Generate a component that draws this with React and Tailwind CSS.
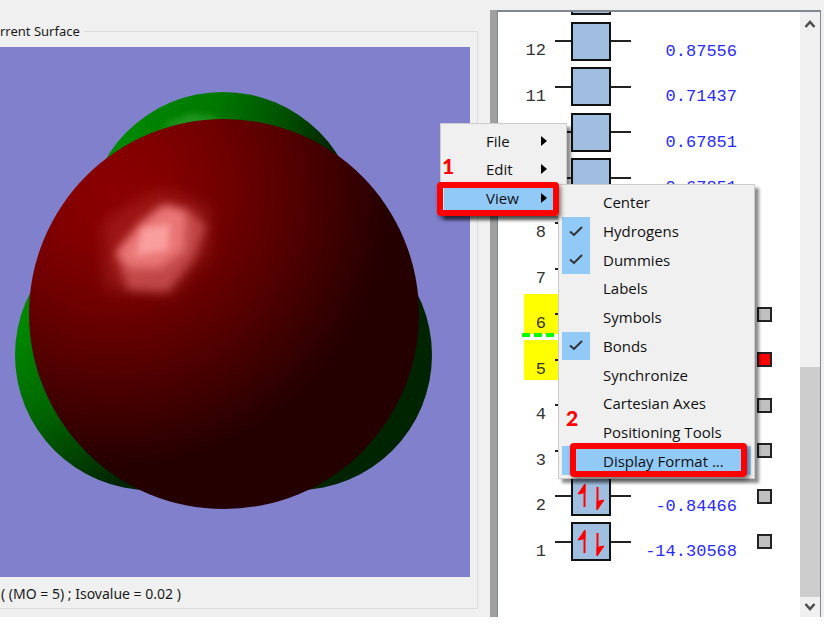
const orbitals = [
  { id: 12, energy: "0.87556" },
  { id: 11, energy: "0.71437" },
  { id: 10, energy: "0.67851" },
  { id: 9, energy: "0.67851" },
  { id: 8 },
  { id: 7 },
  { id: 6, picker: true, active: true, lumo: true },
  { id: 5, picker: true, active: true, selected: true, filled: true },
  { id: 4, picker: true, filled: true },
  { id: 3, picker: true, filled: true },
  { id: 2, picker: true, filled: true, energy: "-0.84466" },
  { id: 1, picker: true, filled: true, energy: "-14.30568" },
];

const viewItems = [
  { label: "Center" },
  { label: "Hydrogens", checked: true },
  { label: "Dummies", checked: true },
  { label: "Labels" },
  { label: "Symbols" },
  { label: "Bonds", checked: true },
  { label: "Synchronize" },
  { label: "Cartesian Axes" },
  { label: "Positioning Tools" },
  { label: "Display Format ...", current: true },
];

function SurfaceDrawing() {
  return (
    <svg viewBox="0 47 470 530" preserveAspectRatio="xMinYMin meet" className="block w-full h-full">
      <defs>
        <radialGradient id="lobe" gradientUnits="userSpaceOnUse" cx="112" cy="190" r="300">
          <stop offset="0" stopColor="#8b0000" />
          <stop offset="0.2" stopColor="#820000" />
          <stop offset="0.4" stopColor="#6e0000" />
          <stop offset="0.6" stopColor="#540000" />
          <stop offset="0.8" stopColor="#370000" />
          <stop offset="0.93" stopColor="#240000" />
        </radialGradient>
        <linearGradient id="topLobe" gradientUnits="userSpaceOnUse" x1="130" y1="110" x2="330" y2="160">
          <stop offset="0" stopColor="#008800" />
          <stop offset="0.4" stopColor="#007800" />
          <stop offset="0.7" stopColor="#005500" />
          <stop offset="1" stopColor="#002400" />
        </linearGradient>
        <linearGradient id="leftLobe" gradientUnits="userSpaceOnUse" x1="20" y1="330" x2="105" y2="490">
          <stop offset="0" stopColor="#008600" />
          <stop offset="0.4" stopColor="#006c00" />
          <stop offset="0.75" stopColor="#004400" />
          <stop offset="1" stopColor="#002400" />
        </linearGradient>
        <filter id="wide" x="-30%" y="-30%" width="160%" height="160%">
          <feGaussianBlur stdDeviation="8" />
        </filter>
        <filter id="soft" x="-30%" y="-30%" width="160%" height="160%">
          <feGaussianBlur stdDeviation="5" />
        </filter>
        <filter id="fine" x="-30%" y="-30%" width="160%" height="160%">
          <feGaussianBlur stdDeviation="3" />
        </filter>
      </defs>
      <circle cx="223" cy="228" r="136" fill="url(#topLobe)" />
      <path d="M165 124 L190 114 L212 116 L222 121 L165 128Z" fill="#38a838" opacity="0.6" filter="url(#fine)" />
      <circle cx="150" cy="355" r="135" fill="url(#leftLobe)" />
      <circle cx="297" cy="355" r="135" fill="#002400" />
      <circle cx="224" cy="314" r="195" fill="url(#lobe)" />
      <path d="M103 222 L142 198 L166 190 L210 208 L208 254 L172 294 L106 290Z" fill="#d85050" opacity="0.3" filter="url(#wide)" />
      <path d="M116 254 L138 226 L160 206 L188 210 L206 226 L194 258 L168 292 L128 290Z" fill="#f07878" opacity="0.5" filter="url(#soft)" />
      <path d="M116 253 L141 224 L166 205 L186 212 L184 250 L160 268 L130 268Z" fill="#ff9090" opacity="0.65" filter="url(#soft)" />
      <path d="M136 256 L142 228 L170 224 L168 250Z" fill="#ffaaaa" opacity="0.75" filter="url(#fine)" />
    </svg>
  );
}

function SurfacePanel() {
  return (
    <div className="flex-1 min-w-0 flex flex-col pt-[22px] pr-3 pb-2 font-['Noto_Sans',sans-serif] text-[#1a1a1a]">
      <fieldset className="flex-1 min-w-0 flex flex-col border border-l-0 border-[#dcdcdc] pr-[7px]">
        <legend className="pr-1 text-[13px] leading-[18px]">rrent Surface</legend>
        <div className="flex-1 min-h-0 mt-[7px] bg-[#8080cc]">
          <SurfaceDrawing />
        </div>
        <p className="pt-2 pb-[5px] pl-px text-[14px] leading-[18px]">( (MO = 5) ; Isovalue = 0.02 )</p>
      </fieldset>
    </div>
  );
}

function SpinPair() {
  return (
    <svg viewBox="0 0 36 36" className="w-9 h-9" fill="#ff0000" stroke="#ff0000">
      <path d="M11.5 29 V7" strokeWidth="2" />
      <path d="M12 6 L5 16 L12 14.5Z" strokeWidth="1" />
      <path d="M24.5 9 V31" strokeWidth="2" />
      <path d="M24 32 L31 22 L24 23.5Z" strokeWidth="1" />
    </svg>
  );
}

function OrbitalRow({ orbital }) {
  return (
    <li className="relative flex items-center h-[45px] odd:h-[46px] pl-[26px]">
      <div className={`flex items-center h-10 ${orbital.active ? "bg-[#ffff00]" : ""}`}>
        <span className="self-end w-[22px] text-right font-['Liberation_Mono',monospace] text-[17px] leading-5 text-[#333]">
          {orbital.id}
        </span>
        <span className="w-4 h-[2px] ml-[9px] bg-[#222]" />
        <span className="flex items-center justify-center w-10 h-[39px] border-2 border-[#111] bg-[#a0bfe0]">
          {orbital.filled && <SpinPair />}
        </span>
        <span className="w-5 h-[2px] bg-[#222]" />
      </div>
      <span className="self-end w-[106px] pb-[2px] text-right font-['Liberation_Mono',monospace] text-[17px] leading-5 text-[#2a2aff]">
        {orbital.energy}
      </span>
      {orbital.picker && (
        <input
          type="checkbox"
          aria-label={`Orbital ${orbital.id}`}
          defaultChecked={orbital.selected}
          className="appearance-none w-[15px] h-[15px] ml-5 border-2 border-[#222] bg-[#c0c0c0] checked:bg-[#ff0000]"
        />
      )}
      {orbital.lumo && (
        <div className="absolute left-6 bottom-0 flex gap-1">
          <span className="w-2 h-1 bg-[#00ff00]" />
          <span className="w-2 h-1 bg-[#00ff00]" />
          <span className="w-2 h-1 bg-[#00ff00]" />
        </div>
      )}
    </li>
  );
}

function ScrollBar() {
  return (
    <div className="flex flex-col w-5 bg-[#f0f0f0]">
      <button aria-label="Scroll up" className="flex items-center justify-center h-6">
        <svg viewBox="0 0 12 8" className="w-3 h-2" fill="none" stroke="#505050" strokeWidth="2.6">
          <path d="M1.5 7 L6 2 L10.5 7" />
        </svg>
      </button>
      <div className="flex-1 flex flex-col justify-end">
        <div className="h-[41%] bg-[#cdcdcd]" />
      </div>
      <button aria-label="Scroll down" className="flex items-center justify-center h-5">
        <svg viewBox="0 0 12 8" className="w-3 h-2" fill="none" stroke="#505050" strokeWidth="2.6">
          <path d="M1.5 1 L6 6 L10.5 1" />
        </svg>
      </button>
    </div>
  );
}

function OrbitalPanel() {
  return (
    <div className="flex shrink-0 w-[334px] pt-[10px] pr-[3px]">
      <div className="w-[7px] bg-[#a0a0a0]" />
      <div className="flex-1 flex border-t-2 border-x border-[#828790] bg-white">
        <div className="flex-1 pb-10">
          <div className="pl-[73px] pb-[3px]">
            <div className="w-10 h-[3px] border-2 border-t-0 border-[#111] bg-[#a0bfe0]" />
          </div>
          <ul>
            {orbitals.map((orbital) => (
              <OrbitalRow key={orbital.id} orbital={orbital} />
            ))}
          </ul>
        </div>
        <ScrollBar />
      </div>
    </div>
  );
}

function MenuItem({ label, current }) {
  return (
    <button
      role="menuitem"
      className={`flex items-center justify-between pl-[42px] pr-4 text-left ${current ? "bg-[#91c9f7]" : ""}`}
    >
      {label}
      <svg viewBox="0 0 6 10" className="w-[6px] h-[10px]">
        <path d="M0 0 L6 5 L0 10Z" fill="#000" />
      </svg>
    </button>
  );
}

function ViewMenuItem({ item }) {
  return (
    <button
      role="menuitemcheckbox"
      aria-checked={Boolean(item.checked)}
      className={`flex items-center gap-[13px] text-left ${item.current ? "bg-[#91c9f7]" : ""}`}
    >
      <span className={`flex items-center justify-center w-7 h-full ${item.checked ? "bg-[#91c9f7]" : ""}`}>
        {item.checked && (
          <svg viewBox="0 0 14 11" className="w-[14px] h-[11px]" fill="none" stroke="#333" strokeWidth="2">
            <path d="M1 5.5 L5 9 L13 1" />
          </svg>
        )}
      </span>
      {item.label}
    </button>
  );
}

function ContextMenu() {
  return (
    <div className="absolute left-[440px] top-[123px] text-[15px] leading-5 text-[#111]">
      <div
        role="menu"
        className="grid auto-rows-fr w-[127px] h-[93px] p-[3px] border border-[#ccc] bg-[#f0f0f0] shadow-[4px_4px_3px_rgba(0,0,0,0.45)]"
      >
        <MenuItem label="File" />
        <MenuItem label="Edit" />
        <MenuItem label="View" current />
      </div>
      <div
        role="menu"
        className="absolute left-[118px] top-[61px] grid auto-rows-fr w-[197px] h-[295px] p-[3px] border border-[#ccc] bg-[#f0f0f0] shadow-[4px_4px_3px_rgba(0,0,0,0.45)]"
      >
        {viewItems.map((item) => (
          <ViewMenuItem key={item.label} item={item} />
        ))}
      </div>
      <span className="absolute left-[2px] top-[31px] font-['Lato',sans-serif] font-black text-[21px] leading-6 text-[#ff0000]">1</span>
      <div className="absolute left-[-3px] top-[59px] w-[122px] h-[34px] border-6 border-[#ff0000] rounded-[4px] shadow-[2px_3px_4px_rgba(0,0,0,0.5)]" />
      <span className="absolute left-[126px] top-[283px] font-['Lato',sans-serif] font-black text-[21px] leading-6 text-[#ff0000]">2</span>
      <div className="absolute left-[130px] top-80 w-[177px] h-[34px] border-6 border-[#ff0000] rounded-[4px] shadow-[2px_3px_4px_rgba(0,0,0,0.5)]" />
    </div>
  );
}

export default function App() {
  return (
    <div className="min-h-screen flex flex-col pb-2 bg-white font-['Open_Sans',sans-serif]">
      <main className="relative flex-1 flex bg-[#f0f0f0]">
        <SurfacePanel />
        <OrbitalPanel />
        <ContextMenu />
      </main>
    </div>
  );
}
